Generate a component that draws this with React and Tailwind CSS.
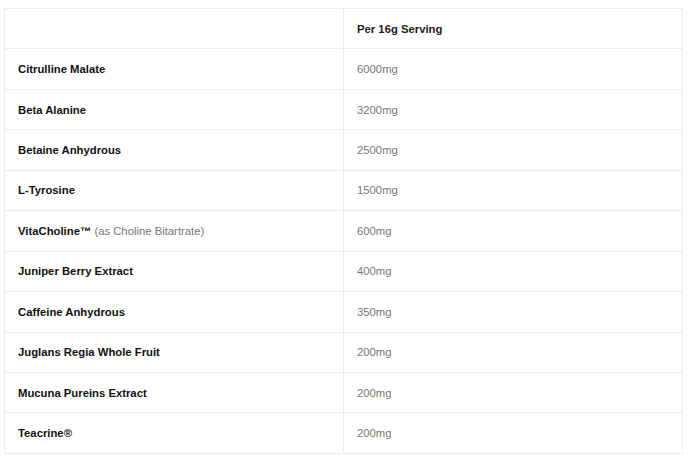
import React from 'react';

const ROWS = [
  { name: 'Citrulline Malate', amount: '6000mg' },
  { name: 'Beta Alanine', amount: '3200mg' },
  { name: 'Betaine Anhydrous', amount: '2500mg' },
  { name: 'L-Tyrosine', amount: '1500mg' },
  { name: 'VitaCholine™', note: '(as Choline Bitartrate)', amount: '600mg' },
  { name: 'Juniper Berry Extract', amount: '400mg' },
  { name: 'Caffeine Anhydrous', amount: '350mg' },
  { name: 'Juglans Regia Whole Fruit', amount: '200mg' },
  { name: 'Mucuna Pureins Extract', amount: '200mg' },
  { name: 'Teacrine®', amount: '200mg' },
];

export default function App() {
  return (
    <div
      className="w-[693px] h-[467px] bg-white pt-[8px] pl-[4px]"
      style={{ fontFamily: '"Liberation Sans", Arial, sans-serif' }}
    >
      <table className="w-[679px] border-collapse text-[11.3px] leading-[14px]">
        <thead>
          <tr className="h-[40.45px]">
            <th className="w-[339px] border border-[#ececec]" />
            <th className="border border-[#ececec] pl-[13px] text-left font-bold text-[#222]">
              Per 16g Serving
            </th>
          </tr>
        </thead>
        <tbody>
          {ROWS.map((r) => (
            <tr key={r.name} className="h-[40.45px]">
              <td className="border border-[#ececec] pl-[13px] font-bold text-[#111]">
                {r.name}
                {r.note && <span className="font-normal text-[#777]"> {r.note}</span>}
              </td>
              <td className="border border-[#ececec] pl-[13px] text-[#777]">{r.amount}</td>
            </tr>
          ))}
        </tbody>
      </table>
    </div>
  );
}
